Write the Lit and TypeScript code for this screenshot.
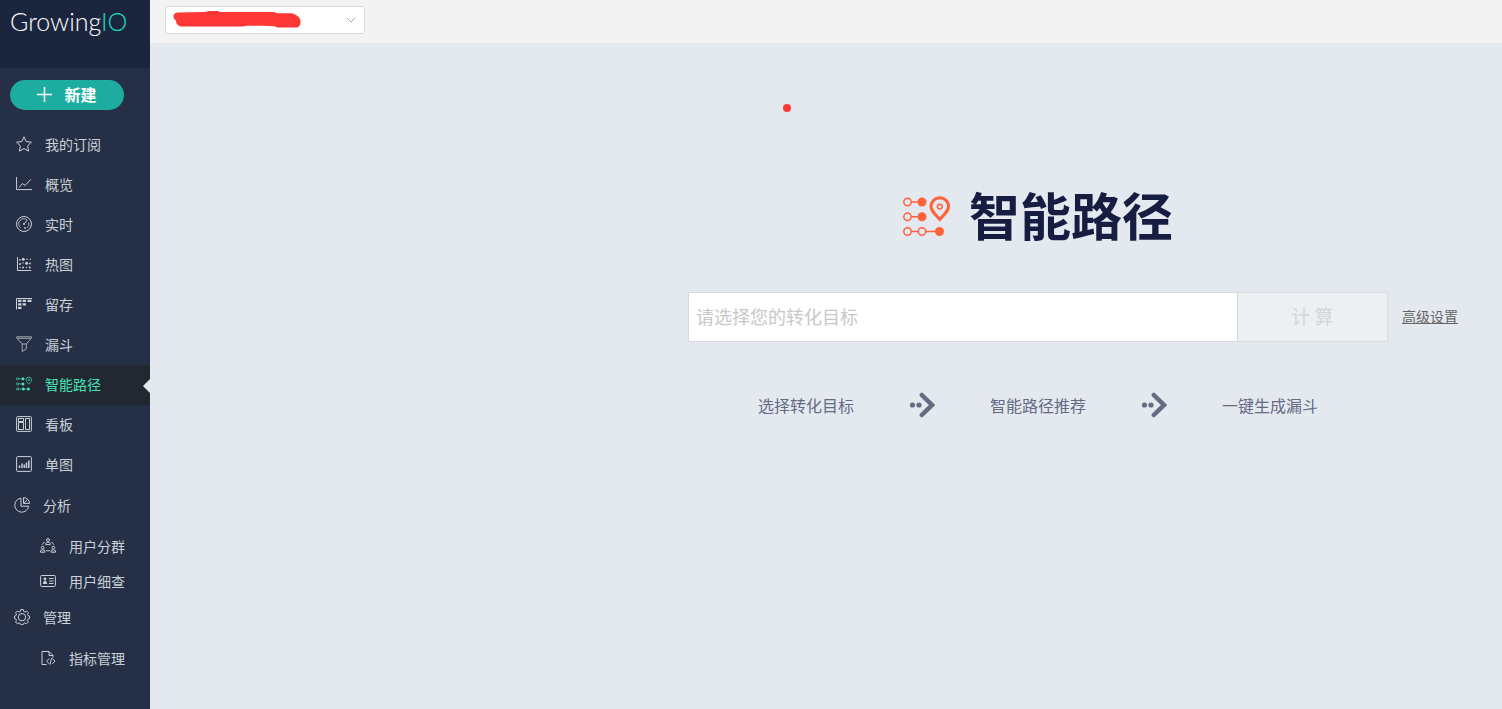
import { LitElement, html, svg, css, TemplateResult } from "lit";
import { customElement, property } from "lit/decorators.js";

type Item = { label: string; icon: string };

const MAIN_ITEMS: Item[] = [
  { label: "我的订阅", icon: "star" },
  { label: "概览", icon: "trend" },
  { label: "实时", icon: "gauge" },
  { label: "热图", icon: "scatter" },
  { label: "留存", icon: "retention" },
  { label: "漏斗", icon: "funnel" },
  { label: "智能路径", icon: "path" },
  { label: "看板", icon: "board" },
  { label: "单图", icon: "bars" },
];

const GROUPS: { title: Item; children: Item[] }[] = [
  {
    title: { label: "分析", icon: "pie" },
    children: [
      { label: "用户分群", icon: "people" },
      { label: "用户细查", icon: "card" },
    ],
  },
  {
    title: { label: "管理", icon: "gear" },
    children: [{ label: "指标管理", icon: "doc" }],
  },
];

const STEPS = ["选择转化目标", "智能路径推荐", "一键生成漏斗"];

const person = (x: number, y: number) => svg`
  <circle cx=${x} cy=${y} r="1.4"/>
  <path d="M${x - 2.2} ${y + 4.6}V${y + 3.4}Q${x - 1.9} ${y + 2.2} ${x} ${y + 2.2}T${x + 2.2} ${y + 3.4}V${y + 4.6}Z"/>`;

const ICONS: Record<string, TemplateResult | ReturnType<typeof svg>> = {
  star: svg`<path d="M8 .8l2.2 4.8 5.2.6-3.8 3.6 1 5.3L8 12.6l-4.6 2.5 1-5.3L.6 6.2l5.2-.6z"/>`,
  trend: svg`<path d="M.6 1v12.600H16M3 11.500L6.500 7.500l2.500 2L14.800 3.400"/>`,
  gauge: svg`<circle cx="8" cy="8" r="7.500"/><path d="M11 3.900A5 5 0 1 0 4.600 11.700M12.700 6.300a5 5 0 0 1-1.300 5.300" stroke-width=".8"/><circle cx="8" cy="8" r="1" class="fill"/><path d="M8.400 7.500l3-3.400"/><circle cx="9" cy="12" r=".9" class="fill"/>`,
  scatter: svg`<path d="M1.500 1v13.500H15.300"/><g class="fill"><circle cx="7.300" cy="3.300" r="1.500"/><circle cx="10.600" cy="7.300" r="1.500"/><circle cx="4" cy="3.800" r=".9"/><circle cx="11" cy="3.300" r=".8"/><circle cx="14.300" cy="3.300" r=".7"/><circle cx="4" cy="8" r="1"/><circle cx="7" cy="7" r=".7"/><circle cx="14" cy="7.500" r=".9"/><circle cx="4" cy="11.500" r=".7"/><circle cx="7" cy="11.500" r="1"/><circle cx="10.500" cy="11.500" r=".7"/><circle cx="13.800" cy="11.500" r="1"/></g>`,
  retention: svg`<path d="M.5 13.500V2.500H16"/><g class="fill"><path d="M2 3.800h3.500v2.200H2zM6.700 3.800h3.300v2.200H6.700zM11.500 3.800H15.500v2.200h-4zM2 7.200h3.500v2.200H2zM6.700 7.200h3.300v2.200H6.700zM2 10.700h3.500v2.200H2z"/></g>`,
  funnel: svg`<path opacity=".75" d="M.8.800h14.600v1.300L10.300 8v5L6.200 15.500V8L.8 2.100zM1.500 2.300h13M6.200 8h4"/>`,
  path: svg`<g stroke-width=".7"><circle cx="1.600" cy="2.800" r="1.100"/><circle cx="1.600" cy="7.900" r="1.100"/><circle cx="1.600" cy="13" r="1.100"/><circle cx="7.300" cy="13" r="1.100"/><path d="M2.800 2.800h3M2.800 7.900h3M2.800 13h3M8.400 13h3M12.800 8.200C11 6.300 10 5 10 3.900a2.800 2.800 0 0 1 5.600 0C15.600 5 14.600 6.300 12.800 8.200z"/><circle cx="12.800" cy="3.900" r=".8"/></g><g class="fill"><circle cx="7" cy="2.800" r="1.500"/><circle cx="7" cy="7.900" r="1.500"/><circle cx="7.300" cy="13" r="1.300"/><circle cx="12.500" cy="13" r="1.500"/></g>`,
  board: svg`<rect x=".6" y=".6" width="14.800" height="14.800" rx="1"/><path d="M2.500 2.500h5v3h-5zM2.500 6.500h5v7h-5zM9.500 2.500h4v11h-4z"/>`,
  bars: svg`<rect x=".6" y=".6" width="14.800" height="14.800" rx="1"/><path d="M3.500 12V9.500M6 12V7.500M8.300 12V8.500M10.500 12V6.500M12.800 12V4.500" stroke-width="1.500"/>`,
  pie: svg`<path d="M7 1.200A7 7 0 1 0 14.700 9.200H7zM9.500.6V6.400H15.500A6 6 0 0 0 9.500.6zM9.800 6.100L13.400 2.500"/>`,
  people: svg`${person(8, 2)}${person(2.7, 9.6)}${person(13.3, 9.6)}<path d="M4.500 3.800L2.200 6.600M11.500 3.800l2.300 2.800M6.200 12.500Q8 13.500 9.800 12.500"/>`,
  card: svg`<rect x=".6" y="2.500" width="14.800" height="11" rx="1"/><g class="fill"><circle cx="5" cy="6" r="1.400"/><path d="M2.800 11Q3 8 5 7.500 7 8 7.200 11z"/></g><path d="M9 5.500h4.500M9 8h4.500M9 10.500h4.500"/>`,
  gear: svg`<path d="M6.700.6h2.600l.5 1.900 1.100.5L12.600 2l1.800 1.800-.9 1.600.5 1.200 1.500.5v2.600l-1.600.5-.5 1.200.9 1.600-1.800 1.800-1.700-.9-1.100.5-.5 1.300H6.700l-.5-1.300-1.200-.5-1.600.9L1.600 13l.9-1.600-.5-1.200L.5 9.700V7.100L2 6.600l.5-1.200-.9-1.600L3.400 2l1.700 1 1.100-.5z"/><circle cx="8" cy="8.200" r="3.700"/>`,
  doc: svg`<path d="M6.500 14.500H2V1.500h7l4 4v2M9 1.500v4h4M9.300 8.500L6.500 11.200l2.800 2.700M12.300 8.500L15 11.200l-2.700 2.700M11.600 8l-1.600 6.500"/>`,
};

@customElement("nav-icon")
export class NavIcon extends LitElement {
  static styles = css`
    :host { display: block; width: 16px; height: 16px; flex: none; }
    .icon { display: block; fill: none; stroke: currentColor; stroke-width: 1; }
    .fill { fill: currentColor; stroke: none; }
  `;
  @property() name = "";
  render() {
    return html`<svg class="icon" width="16" height="16" viewBox="0 0 16 16" aria-hidden="true">${ICONS[this.name]}</svg>`;
  }
}

@customElement("app-sidebar")
export class AppSidebar extends LitElement {
  static styles = css`
    :host { display: block; width: 150px; flex: none; background: #253046; color: #cbd0d7; font-size: 14px; }
    .brand { box-sizing: border-box; height: 68px; padding: 6px 10px; background: #1b263e; }
    .logo { display: block; font: 300 25px/30px Lato, "Open Sans", sans-serif; color: #fff; text-decoration: none; }
    .io { color: #1fdcc0; }
    .create {
      display: flex; align-items: center; justify-content: center; gap: 12px; box-sizing: border-box;
      width: 114px; height: 30px; margin: 12px 10px 15px; padding: 0 0 2px; border: 0; border-radius: 15px;
      background: #1dada0; color: #fff; font-family: inherit; font-size: 16px; font-weight: 700;
    }
    .plus { fill: none; stroke: #fff; stroke-width: 1.5; }
    .list { list-style: none; margin: 0; padding: 0; }
    .link {
      position: relative; box-sizing: border-box; display: flex; align-items: center; gap: 13px;
      height: 40px; padding: 0 0 2px 16px; color: inherit; text-decoration: none;
    }
    .active { background: #222831; color: #48e3b8; }
    .active::after {
      content: ""; position: absolute; right: 0; top: 14px;
      border: 7px solid transparent; border-left: 0; border-right-color: #e4e9f0;
    }
    .groups { display: grid; gap: 1px; padding-top: 3px; }
    .title { height: 36px; padding-left: 14px; }
    .sub { padding-top: 5px; }
    .child { height: 35px; padding-left: 40px; }
  `;
  private link(item: Item, kind = "") {
    return html`<a class="link ${kind}" href="#"><nav-icon name=${item.icon}></nav-icon><span>${item.label}</span></a>`;
  }
  render() {
    return html`
      <div class="brand"><a class="logo" href="#">Growing<span class="io">IO</span></a></div>
      <button class="create" type="button">
        <svg class="plus" width="15" height="15" viewBox="0 0 15 15" aria-hidden="true"><path d="M7.500 0v15M0 7.500h15"/></svg>
        <span>新建</span>
      </button>
      <nav>
        <ul class="list">
          ${MAIN_ITEMS.map((i) => html`<li>${this.link(i, i.icon === "path" ? "active" : "")}</li>`)}
        </ul>
        <ul class="list groups">
          ${GROUPS.map((g) => html`<li>
            ${this.link(g.title, "title")}
            <ul class="list sub">${g.children.map((c) => html`<li>${this.link(c, "child")}</li>`)}</ul>
          </li>`)}
        </ul>
      </nav>`;
  }
}

@customElement("app-root")
export class AppRoot extends LitElement {
  static styles = css`
    :host {
      display: flex; min-height: 100vh; background: #e4e9f0;
      font-family: "Noto Sans CJK SC", sans-serif; color: #666a82;
    }
    .page { flex: 1; min-width: 0; }
    .topbar { box-sizing: border-box; height: 43px; padding: 6px 15px; background: #f3f3f3; }
    .picker { position: relative; width: 200px; height: 28px; }
    .select {
      display: block; appearance: none; width: 100%; height: 100%; border: 1px solid #d9d9d9; border-radius: 3px;
      background: #fff; color: transparent;
    }
    .scribble { position: absolute; left: 8px; top: 5px; fill: #fd3837; pointer-events: none; }
    .chevron { position: absolute; right: 9px; top: 11px; fill: none; stroke: #aaa; pointer-events: none; }
    .dot { position: absolute; left: 783px; top: 104px; width: 8px; height: 8px; border-radius: 50%; background: #fd3837; }
    .content { padding: 144px 0 40px 424px; }
    .heading { display: flex; align-items: center; justify-content: center; gap: 18px; }
    .mark { fill: none; stroke: #ff6239; stroke-width: 1.5; }
    .solid { fill: #ff6239; stroke: none; }
    .name { margin: 0; font-size: 51px; line-height: 54px; font-weight: 700; color: #171d40; }
    .search { display: grid; grid-template-columns: 1fr minmax(0, 700px) 1fr; align-items: center; margin-top: 51px; }
    .form { grid-column: 2; display: flex; height: 50px; }
    .goal {
      flex: 1; min-width: 0; box-sizing: border-box; padding: 0 7px 2px; border: 1px solid #d9d9d9; border-radius: 0;
      background: #fff; font-family: inherit; font-size: 18px; color: #333;
    }
    .goal::placeholder { color: #c8c8c8; opacity: 1; }
    .run {
      width: 150px; padding: 0 0 3px; border: 1px solid #d9dde0; border-left: 0; background: #ecf0f3;
      color: #d3d6d9; font-family: inherit; font-size: 19px; font-weight: 400;
    }
    .advanced { margin-left: 14px; padding-bottom: 2px; font-size: 14px; color: #666; white-space: nowrap; }
    .steps { display: flex; align-items: center; justify-content: center; gap: 55px; list-style: none; margin: 49px 0 0; padding: 0; font-size: 16px; line-height: 28px; }
    .step { display: flex; align-items: center; gap: 55px; }
    .arrow { fill: none; stroke: #666a82; stroke-width: 5; stroke-linecap: round; }
    .arrow-dot { fill: #666a82; stroke: none; }
  `;
  render() {
    return html`
      <app-sidebar></app-sidebar>
      <div class="page">
        <header class="topbar">
          <div class="picker">
            <select class="select" aria-label="项目"></select>
            <svg class="scribble" width="128" height="17" viewBox="0 0 128 17" aria-hidden="true"><path d="M4 1.500L32 1 36 0h9l2 1h54l3 1.200h15q9 3 8.500 8.800 0 4-3 5.500h-20l-3-1.200-11-.6H74L70 15.500H8q-5-1-5-6-3-2-2.500-5Q1 2 4 1.500z"/></svg>
            <svg class="chevron" width="10" height="6" viewBox="0 0 10 6" aria-hidden="true"><path d="M.8.800L5 5l4.200-4.200"/></svg>
          </div>
        </header>
        <main class="content">
          <div class="heading">
            <svg class="mark" width="48" height="54" viewBox="0 -9 48 54" aria-hidden="true">
              <circle cx="4.500" cy="6" r="3.700"/><circle cx="4.500" cy="20.800" r="3.700"/><circle cx="4.500" cy="35.500" r="3.700"/><circle cx="19" cy="35.500" r="3.700"/>
              <path d="M8.200 6H15M8.200 20.800H15M8.200 35.500H15.300M22.700 35.500H33"/>
              <g class="solid"><circle cx="19" cy="6" r="4.500"/><circle cx="19" cy="20.800" r="4.500"/><circle cx="36.500" cy="35.500" r="4.500"/></g>
              <path stroke-width="3" d="M36.800 23.500C31 17 28 14.500 28 10.600a8.800 8.800 0 0 1 17.600 0C45.600 14.500 42.600 17 36.800 23.500z"/>
              <circle cx="36.800" cy="10.600" r="2.400"/>
            </svg>
            <h1 class="name">智能路径</h1>
          </div>
          <div class="search">
            <form class="form">
              <input class="goal" type="text" aria-label="转化目标" placeholder="请选择您的转化目标" />
              <button class="run" type="button" disabled>计 算</button>
            </form>
            <a class="advanced" href="#">高级设置</a>
          </div>
          <ol class="steps">
            ${STEPS.map((s, i) => html`<li class="step">
              ${i ? html`<svg class="arrow" width="26" height="26" viewBox="0 0 26 26" aria-hidden="true">
                <g class="arrow-dot"><circle cx="3.500" cy="13" r="2.600"/><circle cx="10" cy="13" r="2.600"/></g>
                <path d="M12.800 3L23 13l-10.200 10" stroke-width="4.500"/></svg>` : ""}
              <span>${s}</span>
            </li>`)}
          </ol>
        </main>
      </div>
      <span class="dot"></span>`;
  }
}
